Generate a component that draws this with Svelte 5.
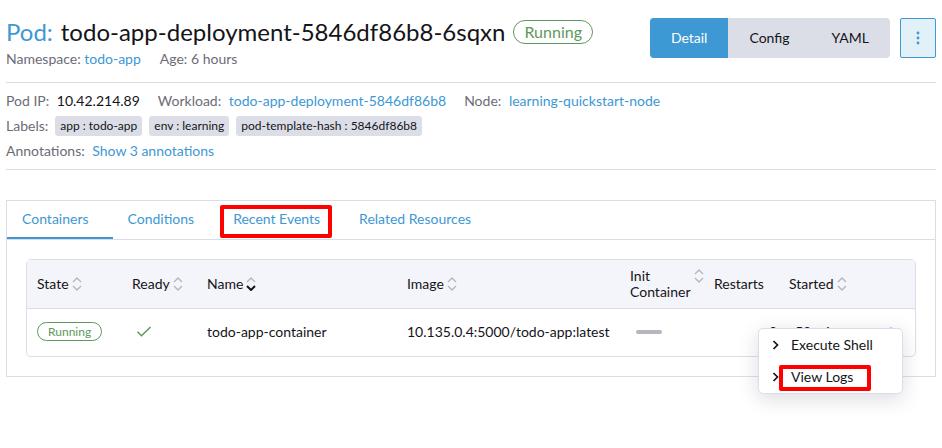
<script>
  const views = ['Detail', 'Config', 'YAML'];
  const labels = ['app : todo-app', 'env : learning', 'pod-template-hash : 5846df86b8'];
  const tabs = ['Containers', 'Conditions', 'Recent Events', 'Related Resources'];
  const columns = [
    { name: 'State', cls: 'state', sort: true },
    { name: 'Ready', cls: 'ready', sort: true },
    { name: 'Name', cls: 'name', sort: true, active: true },
    { name: 'Image', cls: 'image', sort: true },
    { name: 'Init Container', cls: 'init', sort: true },
    { name: 'Restarts', cls: 'restarts', sort: false },
    { name: 'Started', cls: 'started', sort: true },
  ];
  const actions = ['Execute Shell', 'View Logs'];
  let view = $state('Detail');
  let tab = $state('Containers');
</script>

<main>
  <header>
    <div class="heading">
      <h1><a href="#pods">Pod:</a> <span>todo-app-deployment-5846df86b8-6sqxn</span> <span class="badge large">Running</span></h1>
      <div class="sub">
        <span>Namespace: <a href="#namespace">todo-app</a></span>
        <span>Age: 6 hours</span>
      </div>
    </div>
    <div class="controls">
      <div class="views">
        {#each views as v}
          <button class:on={view === v} onclick={() => (view = v)}>{v}</button>
        {/each}
      </div>
      <button class="more" aria-label="More actions">
        <svg width="4" height="16" viewBox="0 0 4 16" fill="currentColor">
          <circle cx="2" cy="3" r="1.4" /><circle cx="2" cy="8" r="1.4" /><circle cx="2" cy="13" r="1.4" />
        </svg>
      </button>
    </div>
  </header>

  <section class="details">
    <div class="line facts">
      <span>Pod IP: <b>10.42.214.89</b></span>
      <span>Workload: <a href="#workload">todo-app-deployment-5846df86b8</a></span>
      <span>Node: <a href="#node">learning-quickstart-node</a></span>
    </div>
    <div class="line tags">
      <span>Labels:</span>
      {#each labels as l}<span class="tag">{l}</span>{/each}
    </div>
    <div class="line"><span>Annotations: <a href="#annotations">Show 3 annotations</a></span></div>
  </section>

  <section class="panel">
    <nav>
      {#each tabs as t}
        <button class:on={tab === t} class:marked={t === 'Recent Events'} onclick={() => (tab = t)}>{t}</button>
      {/each}
    </nav>
    <div class="body">
      <div class="frame">
        <table>
          <thead>
            <tr>
              {#each columns as c}
                <th class={c.cls}>
                  <div class="th">
                    <span>{c.name}</span>
                    {#if c.sort}
                      <svg class="sort" width="10" height="14" viewBox="0 0 10 14" fill="none" stroke="#b6b6c2" stroke-width="1.4">
                        <path d="M1 5 5 1l4 4" />
                        <path d="m1 9 4 4 4-4" stroke={c.active ? '#141419' : '#b6b6c2'} stroke-width={c.active ? 2 : 1.4} />
                      </svg>
                    {/if}
                  </div>
                </th>
              {/each}
              <th class="act"></th>
            </tr>
          </thead>
          <tbody>
            <tr>
              <td><span class="badge">Running</span></td>
              <td>
                <svg class="check" width="16" height="12" viewBox="0 0 16 12" fill="none" stroke="#5d995d" stroke-width="1.5">
                  <path d="m1.5 5.8 4 4 9-8.8" />
                </svg>
              </td>
              <td>todo-app-container</td>
              <td>10.135.0.4:5000/todo-app:latest</td>
              <td><span class="dash"></span></td>
              <td class="num">0</td>
              <td class="since">53 mins</td>
              <td class="act">
                <button class="dots" aria-label="Row actions">
                  <svg width="4" height="14" viewBox="0 0 4 14" fill="currentColor">
                    <circle cx="2" cy="3" r="1.4" /><circle cx="2" cy="7" r="1.4" /><circle cx="2" cy="11" r="1.4" />
                  </svg>
                </button>
                <div class="menu">
                  {#each actions as a}
                    <button>
                      <svg width="8" height="10" viewBox="0 0 8 10" fill="none" stroke="#141419" stroke-width="1.7">
                        <path d="m1.5 1 4 4-4 4" />
                      </svg>
                      <span class:marked={a === 'View Logs'}>{a}</span>
                    </button>
                  {/each}
                </div>
              </td>
            </tr>
          </tbody>
        </table>
      </div>
    </div>
  </section>
</main>

<style>
  :global(body) { margin: 0; background: #fff; }
  main {
    box-sizing: border-box;
    min-height: 100vh;
    padding: 16px 6px 0;
    font: 14px/16px Lato, "Liberation Sans", sans-serif;
    color: #141419;
  }
  button { font: inherit; color: inherit; border: 0; background: none; padding: 0; margin: 0; cursor: pointer; }
  a { color: #3d98d3; text-decoration: none; }

  header {
    display: flex;
    justify-content: space-between;
    align-items: flex-start;
    padding-bottom: 14px;
    border-bottom: 1px solid #dcdee7;
  }
  h1 { display: flex; align-items: center; gap: 8px; margin: 0; font-size: 24px; line-height: 32px; font-weight: 400; }
  .sub { display: flex; gap: 19px; margin-top: 2px; color: #6c6c76; line-height: 18px; }
  .badge {
    display: inline-block;
    padding: 0 10px;
    border: 1px solid #5d995d;
    border-radius: 12px;
    color: #5d995d;
    font-size: 12px;
    line-height: 17px;
  }
  .badge.large { font-size: 16px; line-height: 22px; }
  .controls { display: flex; gap: 10px; padding-top: 2px; }
  .views { display: flex; border-radius: 4px; overflow: hidden; background: #dcdee7; }
  .views button { height: 40px; padding: 0 21px; }
  .views .on { background: #3d98d3; color: #fff; }
  .more {
    display: flex;
    align-items: center;
    justify-content: center;
    width: 36px;
    height: 40px;
    border: 1px solid #3d98d3;
    border-radius: 2px;
    background: #e2f0f8;
    color: #3d98d3;
  }

  .details {
    display: grid;
    gap: 5px;
    padding: 8px 0;
    border-bottom: 1px solid #dcdee7;
    color: #6c6c76;
  }
  .line { display: flex; align-items: center; min-height: 20px; }
  .line a, .line b { margin-left: 4px; }
  .line b { font-weight: 400; color: #141419; }
  .facts { gap: 18px; }
  .tags { gap: 7px; }
  .tag { padding: 0 5px; border-radius: 3px; background: #dcdee7; color: #141419; font-size: 12px; line-height: 20px; }

  .panel { margin-top: 30px; border: 1px solid #dcdee7; }
  nav { display: flex; border-bottom: 1px solid #dcdee7; }
  nav button {
    position: relative;
    height: 38px;
    padding: 0 24px 0 15px;
    border-bottom: 2px solid transparent;
    color: #3d98d3;
  }
  nav button.on { border-bottom-color: #3d98d3; }
  .marked::after {
    content: "";
    position: absolute;
    inset: 4px 12px -1px 2px;
    border: 4px solid #f00;
    border-radius: 2px;
    pointer-events: none;
  }
  .body { padding: 19px; }
  .frame { border: 1px solid #dcdee7; border-radius: 5px; }
  table { width: 100%; border-collapse: separate; border-spacing: 0; table-layout: fixed; }
  thead { background: #f4f5fa; }
  th, td { padding: 0 10px; text-align: left; font-weight: 400; box-sizing: border-box; }
  th { height: 49px; border-bottom: 1px solid #dcdee7; }
  td { height: 47px; padding-bottom: 2px; white-space: nowrap; }
  .th { display: flex; gap: 3px; }
  .sort { flex: none; margin-top: 1px; }
  .state { width: 95px; }
  .ready { width: 75px; }
  .name { width: 200px; }
  .init { width: 84px; padding-right: 0; }
  .restarts { width: 75px; }
  .started { width: 82px; }
  .act { width: 54px; }
  td.act { position: relative; text-align: right; padding-right: 22px; }
  .num { text-align: right; padding-right: 2px; }
  .check { display: block; margin-left: 4px; }
  .dash { display: block; width: 26px; height: 4px; margin-left: 6px; border-radius: 2px; background: #b6b6c2; }
  .since { padding-left: 16px; }
  .dots { color: #3d98d3; vertical-align: middle; }
  .dots svg { display: block; }
  .menu {
    position: absolute;
    z-index: 2;
    top: 19px;
    right: 12px;
    width: 143px;
    border: 1px solid #dcdee7;
    border-radius: 5px;
    background: #fff;
    box-shadow: 0 5px 20px rgba(20, 20, 60, 0.15);
  }
  .menu button { display: flex; align-items: center; gap: 11px; width: 100%; height: 32px; padding: 0 13px; text-align: left; }
  .menu svg { flex: none; }
  .menu span { position: relative; }
  .menu .marked::after { inset: -4px -18px -6px -12px; }
</style>
